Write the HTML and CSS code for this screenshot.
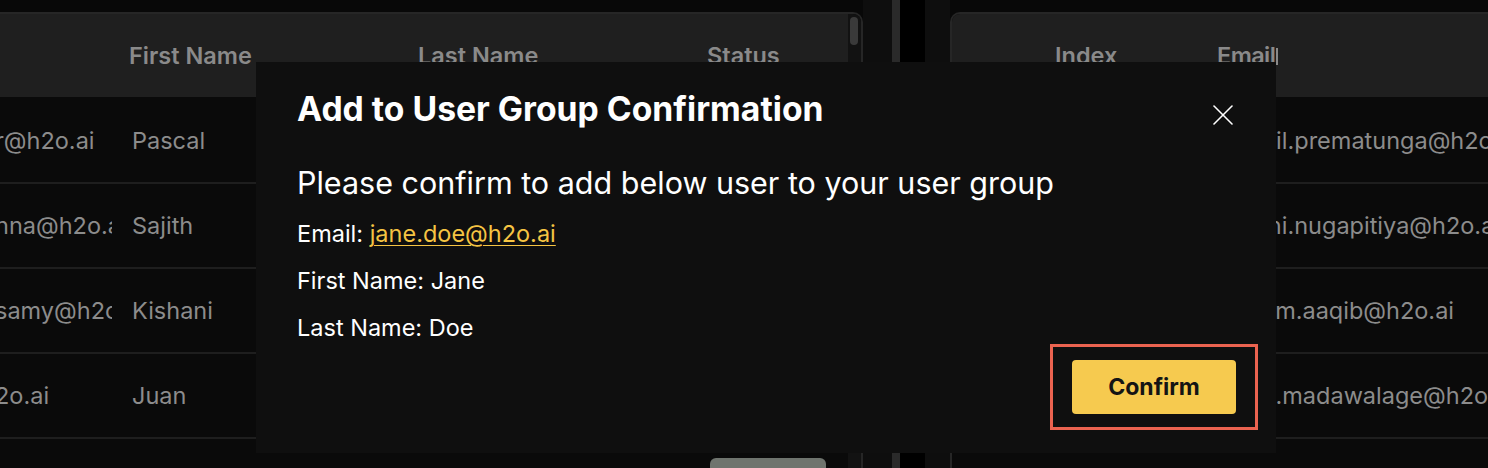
FILE: index.html
```html
<!DOCTYPE html>
<html lang="en">
<head>
<meta charset="utf-8">
<title>Add to User Group Confirmation</title>
<link rel="stylesheet" href="styles.css">
</head>
<body>
<div class="app">
  <section class="pane pane-left">
    <div class="table table-left">
      <div class="table-main">
        <div class="thead grid-left">
          <div class="th"></div>
          <div class="th">First Name</div>
          <div class="th">Last Name</div>
          <div class="th">Status</div>
        </div>
        <div class="tbody">
          <div class="tr grid-left">
            <div class="td td-email">r@h2o.ai</div>
            <div class="td">Pascal</div>
            <div class="td">Pfiffner</div>
            <div class="td"><span class="status-btn">Added</span></div>
          </div>
          <div class="tr grid-left">
            <div class="td td-email">nna@h2o.ai</div>
            <div class="td">Sajith</div>
            <div class="td">Jayawardhanna</div>
            <div class="td"><span class="status-btn">Added</span></div>
          </div>
          <div class="tr grid-left">
            <div class="td td-email">samy@h2o.ai</div>
            <div class="td">Kishani</div>
            <div class="td">Kandasamy</div>
            <div class="td"><span class="status-btn">Added</span></div>
          </div>
          <div class="tr grid-left">
            <div class="td td-email">2o.ai</div>
            <div class="td">Juan</div>
            <div class="td">Rivera</div>
            <div class="td"><span class="status-btn">Added</span></div>
          </div>
          <div class="tr grid-left">
            <div class="td td-email">ne@h2o.ai</div>
            <div class="td">Jane</div>
            <div class="td">Doe</div>
            <div class="td"><span class="status-btn">Add</span></div>
          </div>
        </div>
      </div>
      <div class="vscroll"><div class="thumb"></div></div>
    </div>
  </section>
  <div class="gutter gutter-a"></div>
  <div class="splitter"></div>
  <div class="gap-black"></div>
  <div class="gutter gutter-b"></div>
  <section class="pane pane-right">
    <div class="table table-right">
      <div class="table-main">
        <div class="thead grid-right">
          <div class="th"></div>
          <div class="th">Index</div>
          <div class="th th-email">Email</div>
        </div>
        <div class="tbody">
          <div class="tr grid-right">
            <div class="td"></div>
            <div class="td">1</div>
            <div class="td td-remail">chamil.prematunga@h2o.ai</div>
          </div>
          <div class="tr grid-right">
            <div class="td"></div>
            <div class="td">2</div>
            <div class="td td-remail">dilhani.nugapitiya@h2o.ai</div>
          </div>
          <div class="tr grid-right">
            <div class="td"></div>
            <div class="td">3</div>
            <div class="td td-remail">amin.m.aaqib@h2o.ai</div>
          </div>
          <div class="tr grid-right">
            <div class="td"></div>
            <div class="td">4</div>
            <div class="td td-remail">tasha.madawalage@h2o.ai</div>
          </div>
          <div class="tr grid-right">
            <div class="td"></div>
            <div class="td">5</div>
            <div class="td td-remail">jane.doe@h2o.ai</div>
          </div>
        </div>
      </div>
    </div>
  </section>
</div>

<div class="modal" role="dialog" aria-labelledby="modal-title">
  <div class="modal-head">
    <h2 class="modal-title" id="modal-title">Add to User Group Confirmation</h2>
    <button class="modal-close" aria-label="Close">
      <svg width="20" height="20" viewBox="0 0 20 20" fill="none" stroke="#ffffff" stroke-width="1.6" stroke-linecap="round">
        <line x1="1" y1="1" x2="19" y2="19"/>
        <line x1="19" y1="1" x2="1" y2="19"/>
      </svg>
    </button>
  </div>
  <p class="modal-lead">Please confirm to add below user to your user group</p>
  <p class="modal-line">Email: <a class="modal-link" href="#">jane.doe@h2o.ai</a></p>
  <p class="modal-line">First Name: Jane</p>
  <p class="modal-line">Last Name: Doe</p>
  <div class="modal-foot">
    <div class="highlight">
      <button class="btn-confirm">Confirm</button>
    </div>
  </div>
</div>
</body>
</html>
```

FILE: styles.css
```css
html, body {
  margin: 0;
  padding: 0;
}

body {
  width: 1488px;
  height: 468px;
  overflow: hidden;
  background: #080808;
  font-family: Inter, "Noto Sans", sans-serif;
  position: relative;
}

.app {
  display: flex;
  height: 468px;
}

.pane {
  flex: none;
  height: 100%;
  box-sizing: border-box;
  padding-top: 12px;
}

.pane-left {
  width: 863px;
}

.pane-right {
  flex: 1;
  min-width: 0;
}

.gutter {
  flex: none;
  background: #0e0e0e;
}

.gutter-a {
  width: 29px;
}

.gutter-b {
  width: 25px;
}

.splitter {
  flex: none;
  width: 8px;
  background: #2a2a2a;
}

.gap-black {
  flex: none;
  width: 25px;
  background: #000;
}

.table {
  height: 100%;
  box-sizing: border-box;
  background: #0a0a0a;
  display: flex;
  overflow: hidden;
}

.table-left {
  border-top: 2px solid #262626;
  border-right: 2px solid #262626;
  border-top-right-radius: 10px;
}

.table-right {
  border-top: 2px solid #262626;
  border-left: 2px solid #262626;
  border-top-left-radius: 10px;
}

.table-main {
  flex: 1;
  min-width: 0;
}

.grid-left {
  display: grid;
  grid-template-columns: 112px 289px 289px 1fr;
  align-items: center;
}

.grid-right {
  display: grid;
  grid-template-columns: 86px 162px 1fr;
  align-items: center;
}

.thead {
  height: 83px;
  background: #1f1f1f;
}

.th {
  padding-left: 17px;
  font-size: 23.5px;
  font-weight: 600;
  color: #8a8a8a;
  white-space: nowrap;
}

.th-email {
  letter-spacing: -0.6px;
}

.th-email::after {
  content: "";
  display: inline-block;
  width: 2px;
  height: 17px;
  margin-left: 1px;
  background: #8a8a8a;
  vertical-align: -1px;
}

.tbody {
  padding-top: 2px;
}

.tr {
  height: 85px;
  box-sizing: border-box;
  border-bottom: 2px solid #1e1e1e;
}

.td {
  padding-left: 20px;
  font-size: 23.5px;
  color: #8c8c8c;
  white-space: nowrap;
  overflow: hidden;
}

.td-email {
  padding-left: 0;
  text-indent: -5px;
}

.td-remail {
  padding-left: 15px;
}

.status-btn {
  display: inline-block;
  width: 116px;
  height: 46px;
  border-radius: 6px;
  background: #6f746e;
  color: #111;
  font-size: 18px;
  line-height: 46px;
  text-align: center;
}

.vscroll {
  flex: none;
  width: 13px;
  background: #121212;
}

.thumb {
  width: 8px;
  height: 28px;
  margin: 3px 0 0 2px;
  border-radius: 4px;
  background: #3a3a3a;
}

/* Modal */
.modal {
  position: absolute;
  left: 256px;
  top: 62px;
  width: 1020px;
  height: 391px;
  box-sizing: border-box;
  padding: 27px 18px 23px 41px;
  background: #0f0f0f;
  display: flex;
  flex-direction: column;
  color: #fff;
}

.modal-head {
  display: flex;
  justify-content: space-between;
  align-items: flex-start;
  padding-right: 25px;
}

.modal-title {
  margin: 0;
  font-size: 33.7px;
  line-height: 40px;
  font-weight: 700;
}

.modal-close {
  margin-top: 16px;
  padding: 0;
  width: 20px;
  height: 20px;
  border: none;
  background: none;
  display: flex;
}

.modal-lead {
  margin: 36px 0 0;
  font-size: 30.5px;
  line-height: 36px;
}

.modal-line {
  margin: 19px 0 0;
  font-size: 23.5px;
  line-height: 28px;
}

.modal-link {
  color: #f5c443;
  text-decoration: underline;
  text-underline-offset: 3px;
  text-decoration-thickness: 1px;
}

.modal-foot {
  margin-top: auto;
  display: flex;
  justify-content: flex-end;
}

.highlight {
  border: 3px solid #eb6350;
  padding: 13px 19px;
}

.btn-confirm {
  display: block;
  width: 164px;
  height: 54px;
  border: none;
  border-radius: 4px;
  background: #f6ca4f;
  color: #141414;
  font-family: Inter, "Noto Sans", sans-serif;
  font-size: 23px;
  font-weight: 700;
}
```
